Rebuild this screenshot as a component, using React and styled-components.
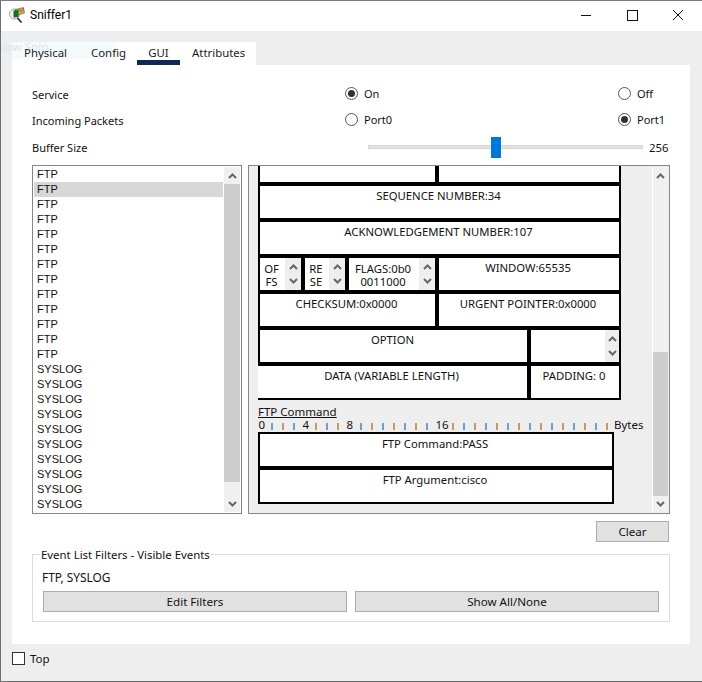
import React from "react";
import styled, { createGlobalStyle } from "styled-components";

const Global = createGlobalStyle`
  html, body { margin: 0; padding: 0; background: #fff; }
  * { box-sizing: border-box; }
  body { font-family: "Noto Sans", "Liberation Sans", sans-serif; font-size: 11px; color: #111; }
`;

const Win = styled.div`
  position: relative;
  width: 702px;
  height: 682px;
  border: 1px solid #6f6f6f;
  border-top-color: #7a7a7a;
  border-right: 0;
  background: #eeeeee;
  display: flex;
  flex-direction: column;
  overflow: hidden;
`;

const TitleBar = styled.div`
  height: 30px;
  background: #fff;
  display: flex;
  align-items: center;
  padding-left: 8px;
  padding-bottom: 2px;
  flex: none;
`;

const TitleText = styled.div`
  font-family: Roboto, "Noto Sans", sans-serif;
  font-size: 12px;
  margin-left: 5px;
  color: #000;
`;

const WinButtons = styled.div`
  margin-left: auto;
  padding-right: 1px;
  display: flex;
`;

const WinBtn = styled.div`
  width: 46px;
  height: 28px;
  display: flex;
  align-items: center;
  justify-content: center;
`;

const Ghost = styled.div`
  position: absolute;
  z-index: 1;
  left: 0;
  top: 35px;
  width: 116px;
  height: 23px;
  background: rgba(225, 240, 250, 0.35);
  color: #dfe3e6;
  font-size: 11.5px;
  line-height: 22px;
  overflow: hidden;
  pointer-events: none;
`;

const GhostText = styled.span`
  margin-left: -2px;
`;

const TabStrip = styled.div`
  margin-top: 11px;
  margin-left: 11px;
  height: 23px;
  width: 244px;
  background: #fff;
  display: flex;
  padding-left: 12px;
  flex: none;
`;

const Tab = styled.div`
  position: relative;
  z-index: 2;
  width: ${(p) => p.$w}px;
  margin-right: ${(p) => p.$gap}px;
  height: 23px;
  line-height: 21px;
  text-align: center;
  white-space: nowrap;
  font-size: 11.4px;
  border-bottom: 5px solid ${(p) => (p.$active ? "#0e2a54" : "transparent")};
  color: #1a1a1a;
`;

const Panel = styled.div`
  margin-left: 11px;
  width: 678px;
  height: 579px;
  background: #fff;
  padding: 15px 20px 0 20px;
  flex: none;
`;

const SettingRow = styled.div`
  height: ${(p) => p.$h || 26}px;
  display: flex;
  align-items: center;
`;

const Label = styled.div`
  width: 313px;
  flex: none;
  position: relative;
  top: 1px;
`;

const BufferLabel = styled(Label)`
  top: 0;
`;

const RadioCell = styled.div`
  display: flex;
  align-items: center;
  gap: 6px;
  width: 273px;
  flex: none;
`;

const RadioDot = styled.span`
  width: 13px;
  height: 13px;
  border-radius: 50%;
  border: 1px solid #555;
  background: #fff;
  display: flex;
  align-items: center;
  justify-content: center;
  &::after {
    content: "";
    width: 7px;
    height: 7px;
    border-radius: 50%;
    background: ${(p) => (p.$on ? "#333" : "transparent")};
  }
`;

const SliderWrap = styled.div`
  display: flex;
  align-items: center;
  margin-left: 23px;
`;

const Track = styled.div`
  position: relative;
  width: 275px;
  height: 4px;
  background: #e3e3e3;
  border: 1px solid #d6d6d6;
`;

const Thumb = styled.div`
  position: absolute;
  left: 122px;
  top: -9px;
  width: 10px;
  height: 21px;
  background: #0078d7;
`;

const SliderValue = styled.div`
  margin-left: 6px;
  font-size: 11.4px;
`;

const Columns = styled.div`
  display: flex;
  gap: 6px;
  margin-top: 3px;
`;

const ListBox = styled.div`
  width: 210px;
  height: 349px;
  border: 1px solid #85858a;
  background: #fff;
  display: flex;
  padding: 1px;
  flex: none;
`;

const Items = styled.div`
  flex: 1;
  padding-right: 1px;
  overflow: hidden;
  font-family: "Liberation Sans", sans-serif;
  font-size: 11px;
`;

const Item = styled.div`
  height: 15px;
  line-height: 15px;
  padding-left: 3px;
  background: ${(p) => (p.$sel ? "#d7d7d7" : "transparent")};
`;

const VScroll = styled.div`
  width: 16px;
  flex: none;
  display: flex;
  flex-direction: column;
  background: #f0f0f0;
`;

const ScrollArrow = styled.div`
  height: ${(p) => p.$h || 17}px;
  flex: none;
  display: flex;
  align-items: center;
  justify-content: center;
`;

const ScrollFill = styled.div`
  height: ${(p) => p.$h}px;
  flex: ${(p) => (p.$h ? "none" : "1")};
  background: ${(p) => p.$c || "transparent"};
`;

const Details = styled.div`
  width: 422px;
  height: 349px;
  border: 1px solid #85858a;
  background: #eeeeee;
  display: flex;
  flex: none;
  overflow: hidden;
  font-size: 11.3px;
`;

const Canvas = styled.div`
  flex: 1;
  padding-left: 9px;
  overflow: hidden;
`;

const Pdu = styled.div`
  width: 363px;
`;

const PduRow = styled.div`
  display: flex;
  height: ${(p) => p.$h || 36}px;
`;

const Cell = styled.div`
  width: ${(p) => p.$w}px;
  flex: ${(p) => (p.$w ? "none" : "1")};
  min-width: 0;
  background: #fff;
  border: 2px solid #000;
  border-top-width: ${(p) => (p.$cut ? 0 : 2)}px;
  border-left-width: ${(p) => (p.$open ? 0 : 2)}px;
  text-align: center;
  line-height: 15px;
  padding-top: 2px;
  display: flex;
  justify-content: center;
`;

const CellText = styled.div`
  flex: 1;
  min-width: 0;
  white-space: nowrap;
  padding-right: 2px;
`;

const SpinCell = styled(Cell)`
  padding: 0;
  align-items: stretch;
`;

const SpinText = styled(CellText)`
  padding: 4px 2px 0 0;
  line-height: 13px;
  white-space: pre;
`;

const Spin = styled.div`
  width: 16px;
  flex: none;
  background: #eeeeee;
  display: flex;
  flex-direction: column;
  justify-content: space-around;
  align-items: center;
  padding: 2px 0;
`;

const OptionRest = styled(Spin)`
  width: 14px;
  margin-left: auto;
`;

const SectionTitle = styled.div`
  margin-top: 5px;
  height: 14px;
  line-height: 14px;
  font-size: 11.5px;
  text-decoration: underline;
`;

const Ruler = styled.div`
  position: relative;
  height: 13px;
  width: 386px;
  font-size: 11.5px;
`;

const Mark = styled.span`
  position: absolute;
  left: ${(p) => p.$x}px;
  top: 0;
  line-height: 12px;
`;

const Tick = styled.span`
  position: absolute;
  left: ${(p) => p.$x}px;
  top: 4px;
  width: 2px;
  height: 7px;
  background: ${(p) => p.$c};
`;

const FtpBox = styled.div`
  width: 356px;
`;

const RightScroll = styled(VScroll)`
  margin: 1px 1px 1px 0;
  border-left: 1px solid #fff;
`;

const ClearRow = styled.div`
  display: flex;
  justify-content: flex-end;
  margin-top: 7px;
  padding-right: 1px;
`;

const Btn = styled.button`
  width: ${(p) => p.$w}px;
  height: 21px;
  background: #e1e1e1;
  border: 1px solid #adadad;
  font: inherit;
  font-size: 11.6px;
  color: #111;
  padding: 0;
`;

const Group = styled.fieldset`
  margin: 6px 0 0;
  padding: 0 10px;
  width: 638px;
  height: 74px;
  border: 1px solid #dcdcdc;
`;

const Legend = styled.legend`
  margin-left: -3px;
  padding: 0 1px;
  line-height: 13px;
  font-size: 11.4px;
`;

const GroupText = styled.div`
  margin-top: 9px;
  line-height: 15px;
  margin-left: -1px;
  font-size: 11.9px;
`;

const GroupBtns = styled.div`
  display: flex;
  gap: 8px;
  margin-top: 6px;
`;

const Footer = styled.div`
  display: flex;
  align-items: center;
  padding-left: 11px;
  height: 29px;
  gap: 5px;
  font-size: 11.5px;
`;

const Check = styled.span`
  width: 13px;
  height: 13px;
  background: #fff;
  border: 1px solid #333;
`;

const Chevron = ({ down }) => (
  <svg width="9" height="6" viewBox="0 0 9 6">
    <path
      d={down ? "M1 1 L4.5 4.5 L8 1" : "M1 5 L4.5 1.5 L8 5"}
      fill="none"
      stroke="#666"
      strokeWidth="2"
    />
  </svg>
);

const AppIcon = () => (
  <svg width="16" height="16" viewBox="0 0 16 16">
    <circle cx="5.5" cy="7" r="5" fill="#f2f2f2" stroke="#a8a8a8" />
    <path d="M8.5 11 L12.5 15.5" stroke="#222" strokeWidth="1.6" />
    <path d="M6 2.5 L14.5 0.5 L15.5 6 L8 8.5 Z" fill="#cfa95c" stroke="#7a5a20" strokeWidth="0.6" />
    <path d="M4.5 3.5 L9.5 3 L9.5 10 L4.5 10.5 Z" fill="#156b1e" />
    <path d="M9.5 2 L12 4.5 L15 0.8" fill="none" stroke="#6b4a18" strokeWidth="0.7" />
  </svg>
);

const events = [...Array(13).fill("FTP"), ...Array(10).fill("SYSLOG")];

// tick places of the ruler, measured from the left of the ftp box
const ticks = [
  13, 24, 35, 57, 68, 79, 102, 113, 124, 135, 146, 157, 168, 194, 205, 216, 227, 238, 249, 260,
  271, 282, 293, 304, 315, 326, 337, 348,
];

export default function App() {
  return (
    <Win>
      <Global />
      <TitleBar>
        <AppIcon />
        <TitleText>Sniffer1</TitleText>
        <WinButtons>
          <WinBtn>
            <svg width="10" height="10" viewBox="0 0 10 10">
              <path d="M0 5.5 H10" stroke="#111" />
            </svg>
          </WinBtn>
          <WinBtn>
            <svg width="11" height="11" viewBox="0 0 11 11">
              <rect x="0.5" y="0.5" width="10" height="10" fill="none" stroke="#111" />
            </svg>
          </WinBtn>
          <WinBtn>
            <svg width="10" height="10" viewBox="0 0 10 10">
              <path d="M0 0 L10 10 M10 0 L0 10" stroke="#111" />
            </svg>
          </WinBtn>
        </WinButtons>
      </TitleBar>

      <TabStrip>
        <Tab $w={43} $gap={24}>Physical</Tab>
        <Tab $w={34} $gap={12}>Config</Tab>
        <Tab $w={43} $gap={12} $active>GUI</Tab>
        <Tab $w={52} $gap={0}>Attributes</Tab>
      </TabStrip>

      <Panel>
        <SettingRow>
          <Label>Service</Label>
          <RadioCell><RadioDot $on />On</RadioCell>
          <RadioCell><RadioDot />Off</RadioCell>
        </SettingRow>
        <SettingRow>
          <Label>Incoming Packets</Label>
          <RadioCell><RadioDot />Port0</RadioCell>
          <RadioCell><RadioDot $on />Port1</RadioCell>
        </SettingRow>
        <SettingRow $h={30}>
          <BufferLabel>Buffer Size</BufferLabel>
          <SliderWrap>
            <Track><Thumb /></Track>
            <SliderValue>256</SliderValue>
          </SliderWrap>
        </SettingRow>

        <Columns>
          <ListBox>
            <Items>
              {events.map((name, i) => (
                <Item key={i} $sel={i === 1}>{name}</Item>
              ))}
            </Items>
            <VScroll>
              <ScrollArrow><Chevron /></ScrollArrow>
              <ScrollFill $h={298} $c="#cdcdcd" />
              <ScrollFill />
              <ScrollArrow><Chevron down /></ScrollArrow>
            </VScroll>
          </ListBox>

          <Details>
            <Canvas>
              <Pdu>
                <PduRow $h={18}>
                  <Cell $w={179} $cut />
                  <Cell $cut />
                </PduRow>
                <PduRow><Cell><CellText>SEQUENCE NUMBER:34</CellText></Cell></PduRow>
                <PduRow><Cell><CellText>ACKNOWLEDGEMENT NUMBER:107</CellText></Cell></PduRow>
                <PduRow>
                  <SpinCell $w={45}>
                    <SpinText>{"OF\nFS"}</SpinText>
                    <Spin><Chevron /><Chevron down /></Spin>
                  </SpinCell>
                  <SpinCell $w={44}>
                    <SpinText>{"RE\nSE"}</SpinText>
                    <Spin><Chevron /><Chevron down /></Spin>
                  </SpinCell>
                  <SpinCell $w={90}>
                    <SpinText>{"FLAGS:0b0\n0011000"}</SpinText>
                    <Spin><Chevron /><Chevron down /></Spin>
                  </SpinCell>
                  <Cell><CellText>WINDOW:65535</CellText></Cell>
                </PduRow>
                <PduRow>
                  <Cell $w={179}><CellText>CHECKSUM:0x0000</CellText></Cell>
                  <Cell><CellText>URGENT POINTER:0x0000</CellText></Cell>
                </PduRow>
                <PduRow>
                  <Cell $w={271}><CellText>OPTION</CellText></Cell>
                  <SpinCell>
                    <OptionRest><Chevron /><Chevron down /></OptionRest>
                  </SpinCell>
                </PduRow>
                <PduRow>
                  <Cell $w={271} $open><CellText>DATA (VARIABLE LENGTH)</CellText></Cell>
                  <Cell><CellText>PADDING: 0</CellText></Cell>
                </PduRow>
              </Pdu>
              <SectionTitle>FTP Command</SectionTitle>
              <Ruler>
                <Mark $x={0.5}>0</Mark>
                <Mark $x={44.5}>4</Mark>
                <Mark $x={88.5}>8</Mark>
                <Mark $x={177.5}>16</Mark>
                {ticks.map((x, i) => (
                  <Tick key={x} $x={x - 0.5} $c={i % 2 ? "#c9985f" : "#6f9fc9"} />
                ))}
                <Mark $x={356}>Bytes</Mark>
              </Ruler>
              <FtpBox>
                <PduRow><Cell><CellText>FTP Command:PASS</CellText></Cell></PduRow>
                <PduRow><Cell><CellText>FTP Argument:cisco</CellText></Cell></PduRow>
              </FtpBox>
            </Canvas>
            <RightScroll>
              <ScrollArrow><Chevron /></ScrollArrow>
              <ScrollFill />
              <ScrollFill $h={144} $c="#cdcdcd" />
              <ScrollArrow $h={16}><Chevron down /></ScrollArrow>
            </RightScroll>
          </Details>
        </Columns>

        <ClearRow>
          <Btn $w={73}>Clear</Btn>
        </ClearRow>

        <Group>
          <Legend>Event List Filters - Visible Events</Legend>
          <GroupText>FTP, SYSLOG</GroupText>
          <GroupBtns>
            <Btn $w={304}>Edit Filters</Btn>
            <Btn $w={304}>Show All/None</Btn>
          </GroupBtns>
        </Group>
      </Panel>

      <Footer>
        <Check />
        Top
      </Footer>

      <Ghost><GhostText>dow Snip</GhostText></Ghost>
    </Win>
  );
}
